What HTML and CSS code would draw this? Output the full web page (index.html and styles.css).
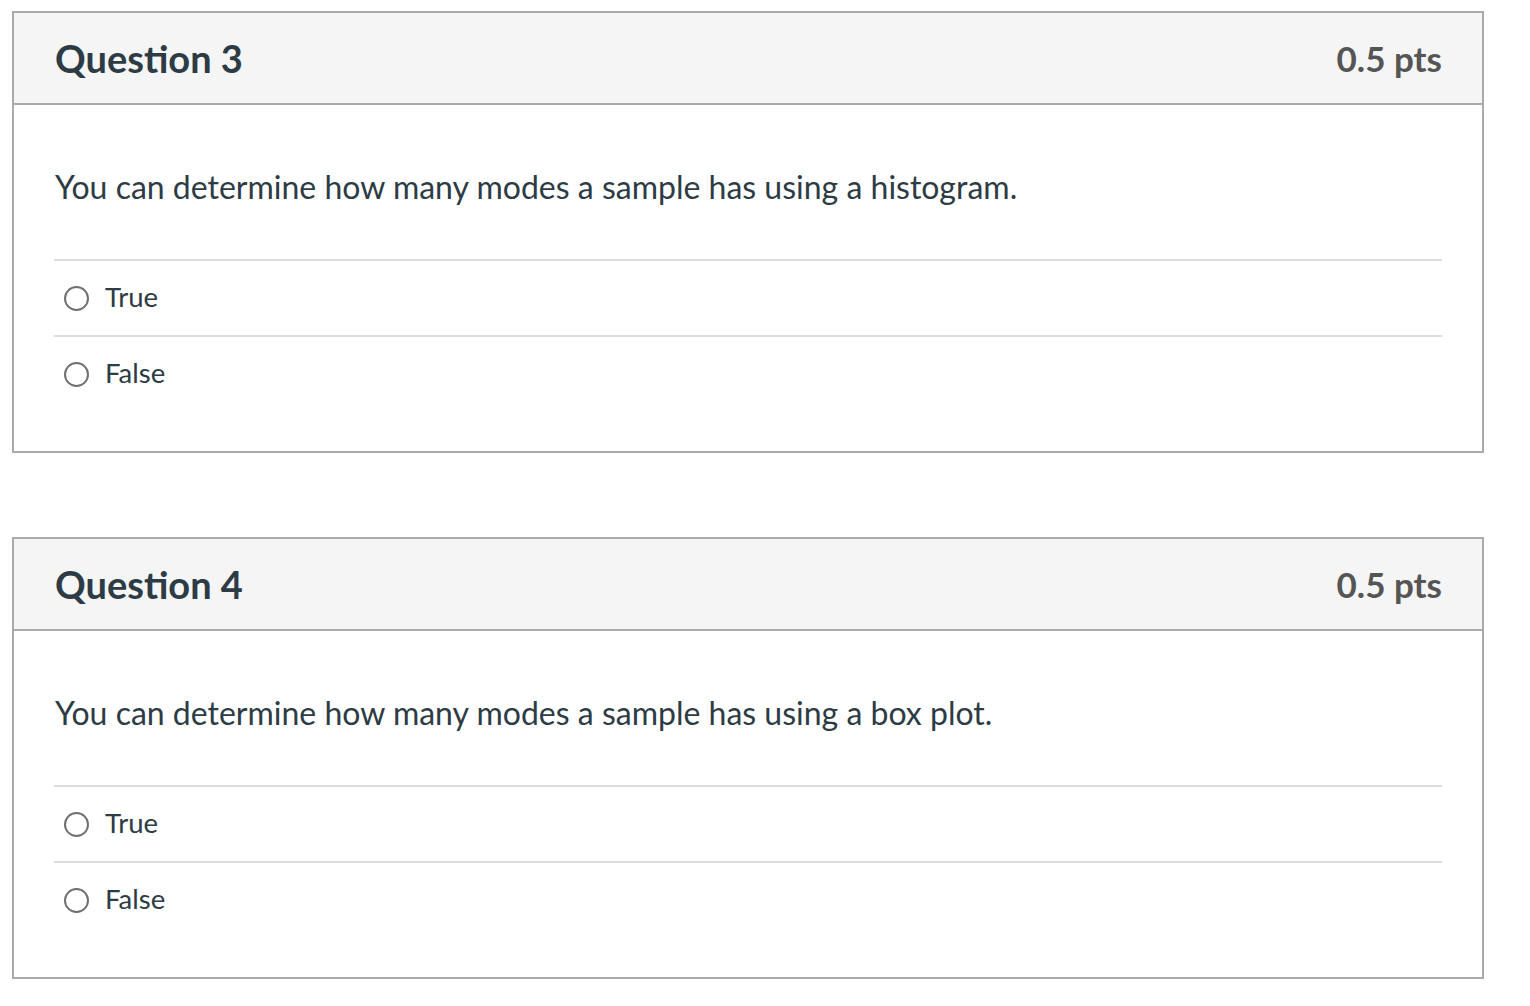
FILE: index.html
```html
<!DOCTYPE html>
<html>
<head>
<meta charset="utf-8">
<link rel="stylesheet" href="styles.css">
</head>
<body>
<div class="quiz">
  <div class="question">
    <div class="q-header">
      <h2 class="q-title">Question 3</h2>
      <span class="q-pts">0.5 pts</span>
    </div>
    <div class="q-body">
      <p class="q-text">You can determine how many modes a sample has using a histogram.</p>
      <div class="answers">
        <label class="answer"><span class="radio"></span><span class="a-text">True</span></label>
        <label class="answer"><span class="radio"></span><span class="a-text">False</span></label>
      </div>
    </div>
  </div>
  <div class="question">
    <div class="q-header">
      <h2 class="q-title">Question 4</h2>
      <span class="q-pts">0.5 pts</span>
    </div>
    <div class="q-body">
      <p class="q-text">You can determine how many modes a sample has using a box plot.</p>
      <div class="answers">
        <label class="answer"><span class="radio"></span><span class="a-text">True</span></label>
        <label class="answer"><span class="radio"></span><span class="a-text">False</span></label>
      </div>
    </div>
  </div>
</div>
</body>
</html>
```
FILE: styles.css
```css
html, body {
  margin: 0;
  padding: 0;
  background: #ffffff;
}
body {
  font-family: Lato, "Liberation Sans", sans-serif;
  color: #2d3b45;
}
.quiz {
  padding: 11px 0 0 12px;
  display: flex;
  flex-direction: column;
  gap: 84px;
  width: 1472px;
}
.question {
  border: 2px solid #aaaaaa;
}
.q-header {
  background: #f5f5f5;
  border-bottom: 2px solid #aaaaaa;
  height: 90px;
  padding: 0 40px 0 41px;
  display: flex;
  align-items: center;
  justify-content: space-between;
}
.q-title {
  margin: 0;
  font-size: 38px;
  font-weight: 700;
  color: #2d3b45;
  line-height: 1;
}
.q-pts {
  font-size: 35px;
  font-weight: 700;
  color: #555555;
  line-height: 1;
}
.q-body {
  padding: 0 40px 40px 40px;
}
.q-text {
  margin: 0;
  padding: 61px 0 51px 1px;
  font-size: 32px;
  line-height: 42px;
}
.answer {
  display: flex;
  align-items: center;
  height: 74px;
  border-top: 2px solid #dddddd;
  font-size: 27.5px;
}
.radio {
  width: 21px;
  height: 21px;
  border: 2px solid #707070;
  border-radius: 50%;
  margin-left: 10px;
  margin-right: 16px;
  flex: none;
}
.a-text {
  line-height: 1;
  position: relative;
  top: -1px;
}
```
